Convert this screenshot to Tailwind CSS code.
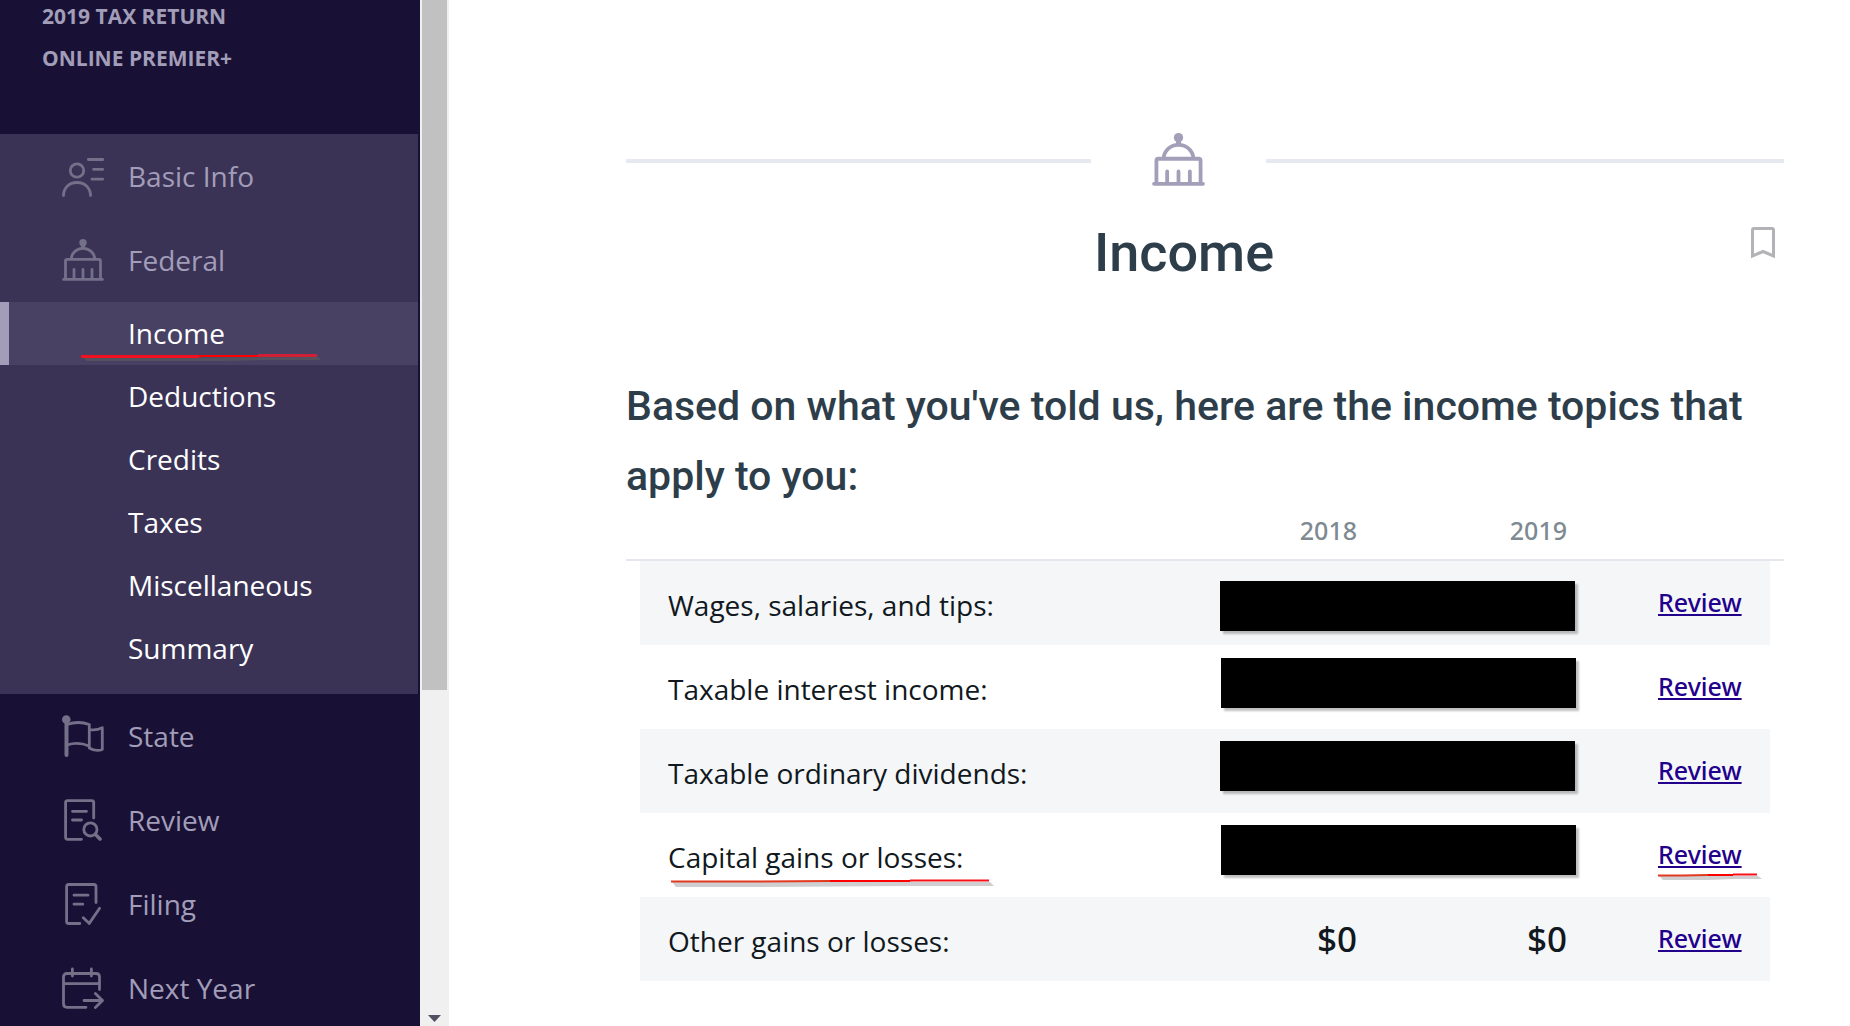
<!DOCTYPE html>
<html lang="en">
  <head>
    <meta charset="UTF-8" />
    <meta name="viewport" content="width=device-width, initial-scale=1.0" />
    <title>2019 Tax Return - Income</title>
    <script src="https://cdn.jsdelivr.net/npm/@tailwindcss/browser@4"></script>
  </head>
  <body
    class="flex h-screen overflow-hidden bg-white font-['Open_Sans','Noto_Sans',sans-serif] text-[#111820]"
  >
    <!-- Sidebar -->
    <aside class="w-[420px] shrink-0 overflow-hidden bg-[#181135] pr-0.5 text-[28px] text-[#a29db8]">
      <div class="-mt-[5px] h-[139px] pl-[42px] text-[21px] leading-[42px] font-bold">
        <p>2019 TAX RETURN</p>
        <p>ONLINE PREMIER+</p>
      </div>

      <nav>
        <div class="bg-[#3a3356] pb-[14px]">
          <a href="#" class="flex h-[84px] items-center gap-6 pl-[62px]">
            <svg class="size-[42px] text-[#757089]" viewBox="0 0 42 42" fill="none" stroke="currentColor" stroke-width="2.8" stroke-linecap="round">
              <circle cx="15" cy="15.5" r="6.7" />
              <path d="M1.5 40.5C1.5 33 7 27.5 15 27.5S28.500 33 28.500 40.500M26.300 4.500H40.700M31.500 14.300H40.700M30 24.200H40.700" />
            </svg>
            Basic Info
          </a>
          <a href="#" class="flex h-[84px] items-center gap-6 pl-[62px]">
            <svg class="size-[42px] text-[#757089]" viewBox="0 0 42 42" fill="none" stroke="currentColor" stroke-width="2.8" stroke-linecap="round">
              <circle cx="21" cy="3.700" r="3.700" fill="currentColor" stroke="none" />
              <path d="M21 5V9" stroke-width="4" stroke-linecap="butt" />
              <path d="M9.300 19.500C9.800 14 14.500 9.400 21 9.400S32.200 14 32.700 19.500M3.500 40V22Q3.500 20.400 5.100 20.400H36.900Q38.500 20.400 38.500 22V40M1.600 40.400H40.400M12 30.500V39M21 30.500V39M30 30.500V39" />
            </svg>
            Federal
          </a>
          <ul class="leading-[63px] text-white">
            <li class="relative border-l-[9px] border-[#a39db9] bg-[#484164] pl-[119px]">
              <a href="#">Income</a>
              <svg class="absolute top-[51px] left-[72px] h-3 w-[240px]" viewBox="0 0 240 12" fill="none">
                <path d="M2 5L237 4L240 7H180L142 8H6Z" fill="#55515f" />
                <path d="M0 3.500H118" stroke="#f01020" stroke-width="3" />
                <path d="M118 3H177" stroke="#ff0000" stroke-width="2" />
                <path d="M177 2.500H236" stroke="#d02035" stroke-width="3" />
              </svg>
            </li>
            <li class="pl-32"><a href="#">Deductions</a></li>
            <li class="pl-32"><a href="#">Credits</a></li>
            <li class="pl-32"><a href="#">Taxes</a></li>
            <li class="pl-32"><a href="#">Miscellaneous</a></li>
            <li class="pl-32"><a href="#">Summary</a></li>
          </ul>
        </div>

        <a href="#" class="flex h-[84px] items-center gap-6 pl-[62px]">
          <svg class="size-[42px] text-[#757089]" viewBox="0 0 42 42" fill="none" stroke="currentColor" stroke-width="2.8" stroke-linecap="round" stroke-linejoin="round">
            <circle cx="4.300" cy="4.500" r="4.300" fill="currentColor" stroke="none" />
            <path d="M4.500 5V40" stroke-width="4" />
            <path d="M5 9.500Q16.500 5.500 27.300 9.500V33Q34 37 40.300 34.500V12.700Q34 15.800 28 14.600M5 30Q16.500 26.500 27 31" />
          </svg>
          State
        </a>
        <a href="#" class="flex h-[84px] items-center gap-6 pl-[62px]">
          <svg class="size-[42px] text-[#757089]" viewBox="0 0 42 42" fill="none" stroke="currentColor" stroke-width="2.8" stroke-linecap="round">
            <path d="M31.700 19V3.600Q31.700 1.600 29.700 1.600H5.600Q3.600 1.600 3.600 3.600V38.300Q3.600 40.300 5.600 40.300H19.500M10.500 12.300H24.500M10.500 21H19.500" />
            <circle cx="28.400" cy="30.400" r="6.600" />
            <path d="M33.500 35.500L38 40" stroke-width="3.600" />
          </svg>
          Review
        </a>
        <a href="#" class="flex h-[84px] items-center gap-6 pl-[62px]">
          <svg class="size-[42px] text-[#757089]" viewBox="0 0 42 42" fill="none" stroke="currentColor" stroke-width="2.8" stroke-linecap="round">
            <path d="M34 19.500V3.500Q34 1.500 32 1.500H6.600Q4.600 1.500 4.600 3.500V38.500Q4.600 40.500 6.600 40.500H17.800M12 12.200H26M12 21.200H20.800" />
            <path d="M21.300 34.800L27.300 40.400L37.600 25.300" />
          </svg>
          Filing
        </a>
        <a href="#" class="flex h-[84px] items-center gap-6 pl-[62px]">
          <svg class="size-[42px] text-[#757089]" viewBox="0 0 42 42" fill="none" stroke="currentColor" stroke-width="2.8" stroke-linecap="round" stroke-linejoin="round">
            <path d="M37.500 22.500V10Q37.500 6.500 34 6.500H5Q1.500 6.500 1.500 10V36.500Q1.500 40.300 5 40.300H24M1.500 16.700H37.500M10.400 2V9M29.400 2V9M22 33.500H40.500M33.400 26.500L40.500 33.500L33.400 40.500" />
          </svg>
          Next Year
        </a>
      </nav>
    </aside>

    <!-- Sidebar scrollbar -->
    <div class="flex w-[29px] shrink-0 flex-col items-center justify-between bg-[#f0f0f0] pb-1">
      <div class="h-[690px] w-[25px] bg-[#c1c1c1]"></div>
      <svg class="h-[7px] w-[13px]" viewBox="0 0 13 7"><path d="M0 0H13L6.500 7Z" fill="#505060" /></svg>
    </div>

    <main class="flex-1 pt-[133px] pr-[66px] pl-[177px]">
      <div class="flex h-14 items-center">
        <div class="h-1 flex-[465] bg-[#e7e9f0]"></div>
        <div class="flex w-[175px] justify-center pb-1">
          <svg class="size-[53px] text-[#a39fb8]" viewBox="0 0 42 42" fill="none" stroke="currentColor" stroke-width="3" stroke-linecap="round">
            <circle cx="21" cy="3.700" r="3.700" fill="currentColor" stroke="none" />
            <path d="M21 5V9" stroke-width="4" stroke-linecap="butt" />
            <path d="M9.300 19.500C9.800 14 14.500 9.400 21 9.400S32.200 14 32.700 19.500M3.500 40V22Q3.500 20.400 5.100 20.400H36.900Q38.500 20.400 38.500 22V40M1.600 40.300H40.400M12 30.500V39M21 30.500V39M30 30.500V39" />
          </svg>
        </div>
        <div class="h-1 flex-[518] bg-[#e7e9f0]"></div>
      </div>

      <div class="mt-7 flex h-[72px] items-center font-[Roboto,sans-serif] text-[#2d3e4a]">
        <h1 class="flex-1 text-center text-[54px] leading-[72px] font-medium">Income</h1>
        <button type="button" aria-label="Bookmark" class="flex w-[42px] justify-center pb-5">
          <svg class="h-8 w-6" viewBox="0 0 24 32" fill="none" stroke="#b3b3b7" stroke-width="3">
            <path d="M1.500 29V3Q1.500 1.500 3 1.500H21Q22.500 1.500 22.500 3V29L12 24.500Z" />
          </svg>
        </button>
      </div>

      <h2 class="mt-[82px] font-[Roboto,sans-serif] text-[41px] leading-[70px] font-medium text-[#2d3e4a]">
        Based on what you've told us, here are the income topics that apply to you:
      </h2>

      <div class="relative px-[14px]">
        <div class="absolute inset-x-0 top-12 h-0.5 bg-[#e4e7ee]"></div>
        <table class="w-full table-fixed">
          <thead>
            <tr class="h-[50px] font-['Noto_Sans',sans-serif] text-[25px] leading-8 text-[#7e8a92]">
              <th></th>
              <th class="w-[210px] pb-3 text-right font-medium">2018</th>
              <th class="w-[210px] pb-3 text-right font-medium">2019</th>
              <th class="w-[203px]"></th>
            </tr>
          </thead>
          <tbody class="text-[28px]">
            <tr class="h-[84px] bg-[#f4f6f8]">
              <td class="pt-1 pl-7">Wages, salaries, and tips:</td>
              <td class="relative">
                <div class="absolute top-5 left-[73px] h-[50px] w-[355px] bg-black shadow-[3px_3px_2px_#00000040]"></div>
              </td>
              <td></td>
              <td class="pl-[91px] font-['Noto_Sans',sans-serif] text-[25px] font-medium"><a href="#" class="text-[#23008c] underline">Review</a></td>
            </tr>
            <tr class="h-[84px]">
              <td class="pt-1 pl-7">Taxable interest income:</td>
              <td class="relative">
                <div class="absolute top-[13px] left-[74px] h-[50px] w-[355px] bg-black shadow-[3px_3px_2px_#00000040]"></div>
              </td>
              <td></td>
              <td class="pl-[91px] font-['Noto_Sans',sans-serif] text-[25px] font-medium"><a href="#" class="text-[#23008c] underline">Review</a></td>
            </tr>
            <tr class="h-[84px] bg-[#f4f6f8]">
              <td class="pt-1 pl-7">Taxable ordinary dividends:</td>
              <td class="relative">
                <div class="absolute top-3 left-[73px] h-[50px] w-[355px] bg-black shadow-[3px_3px_2px_#00000040]"></div>
              </td>
              <td></td>
              <td class="pl-[91px] font-['Noto_Sans',sans-serif] text-[25px] font-medium"><a href="#" class="text-[#23008c] underline">Review</a></td>
            </tr>
            <tr class="h-[84px]">
              <td class="relative pt-1 pl-7">
                Capital gains or losses:
                <svg class="absolute top-[66px] left-[31px] h-3 w-[324px]" viewBox="0 0 324 12" fill="none">
                  <path d="M1 3H319L323 7H240L82 8H5Z" fill="#cfcfd1" />
                  <path d="M0 2.500H80L159 2" stroke="#e23a20" stroke-width="2" />
                  <path d="M159 2H239" stroke="#ff0000" stroke-width="2" />
                  <path d="M239 1.500H318" stroke="#fa1018" stroke-width="2" />
                </svg>
              </td>
              <td class="relative">
                <div class="absolute top-3 left-[74px] h-[50px] w-[355px] bg-black shadow-[3px_3px_2px_#00000040]"></div>
              </td>
              <td></td>
              <td class="relative pl-[91px] font-['Noto_Sans',sans-serif] text-[25px] font-medium">
                <a href="#" class="text-[#23008c] underline">Review</a>
                <svg class="absolute top-[60px] left-[91px] h-3 w-[105px]" viewBox="0 0 105 12" fill="none">
                  <path d="M1 3H100L104 6H76L50 7H5Z" fill="#cfcfd1" />
                  <path d="M0 2.500H25L50 2" stroke="#e23a20" stroke-width="2" />
                  <path d="M50 2H75" stroke="#ff0000" stroke-width="2" />
                  <path d="M75 1.500H99" stroke="#fa1018" stroke-width="2" />
                </svg>
              </td>
            </tr>
            <tr class="h-[84px] bg-[#f4f6f8]">
              <td class="pt-1 pl-7">Other gains or losses:</td>
              <td class="text-right font-['Noto_Sans',sans-serif] text-[35px] font-medium">$0</td>
              <td class="text-right font-['Noto_Sans',sans-serif] text-[35px] font-medium">$0</td>
              <td class="pl-[91px] font-['Noto_Sans',sans-serif] text-[25px] font-medium"><a href="#" class="text-[#23008c] underline">Review</a></td>
            </tr>
          </tbody>
        </table>
      </div>
    </main>
  </body>
</html>
